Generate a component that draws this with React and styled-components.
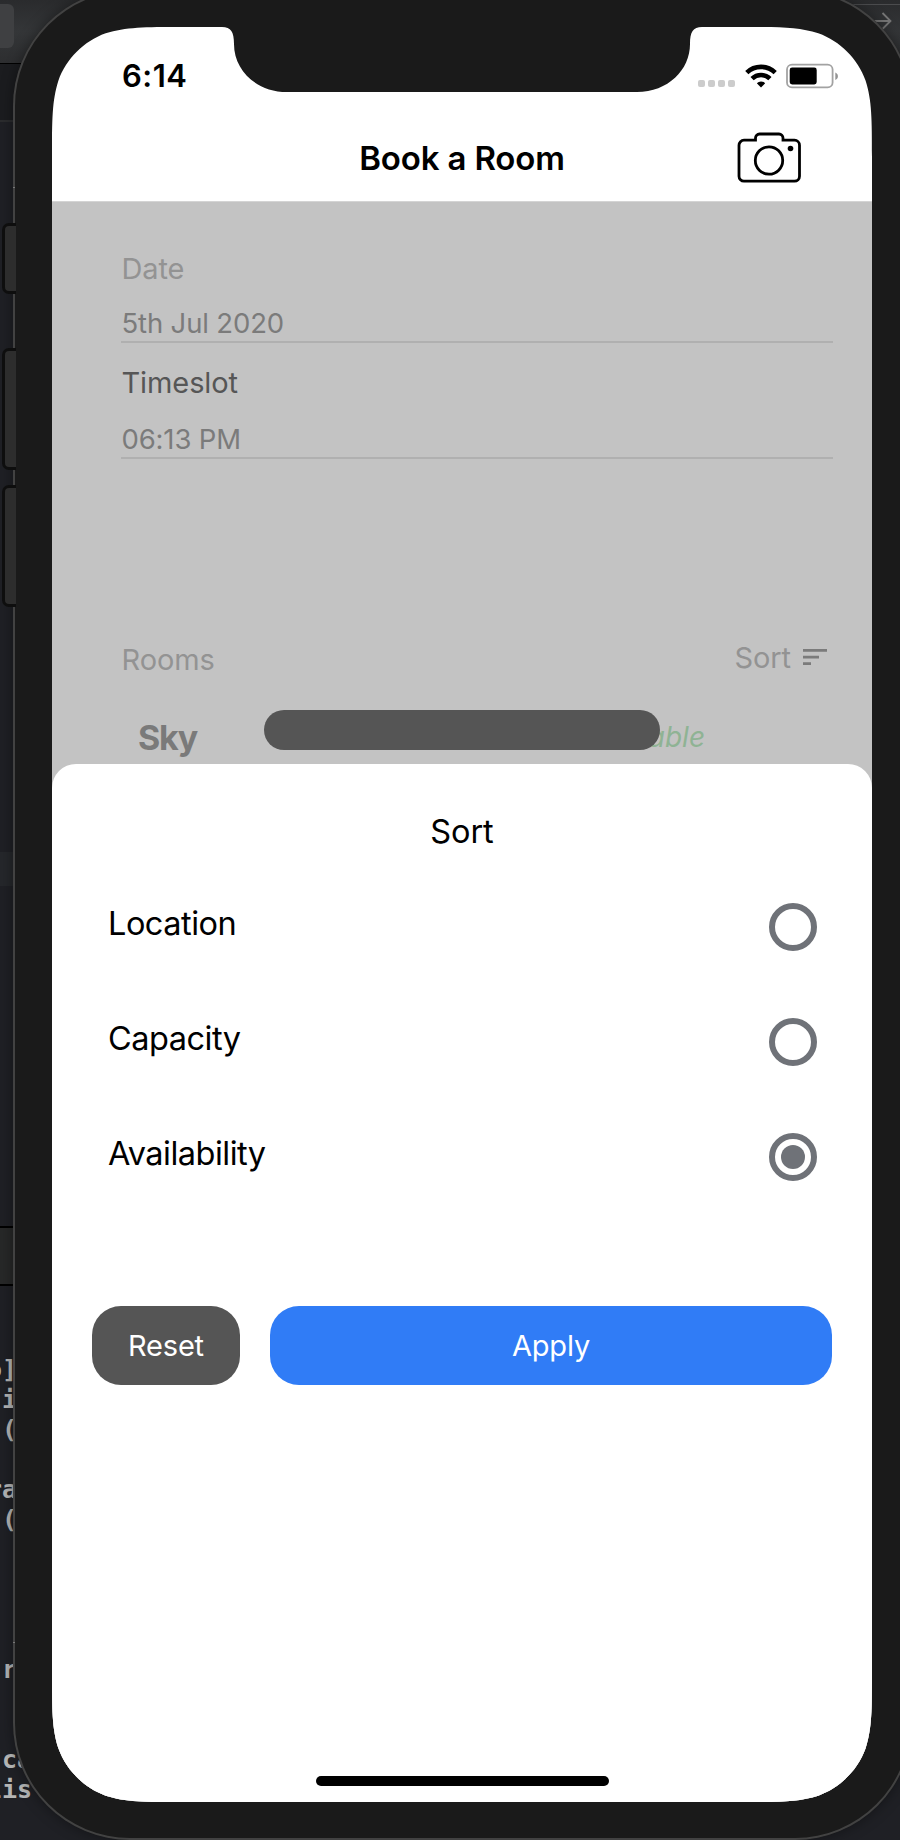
import React from "react";
import styled, { createGlobalStyle } from "styled-components";

const GlobalStyle = createGlobalStyle`
  *, *::before, *::after { box-sizing: border-box; }
  body { margin: 0; background: #1f2025; }
`;

/* Smooth-cornered display outline with the notch cut out of its top edge */
const W = 820;
const H = 1775;
const R = 85;
const corner = (x, y, dx, dy, vertical) => {
  const a = (u, v) => `${(x + dx * u * R).toFixed(2)} ${(y + dy * v * R).toFixed(2)}`;
  const pts = [
    [1.5287, 0], [1.0885, 0], [0.8684, 0], [0.6315, 0.0749],
    [0.3728, 0.1691], [0.1691, 0.3728], [0.0749, 0.6315],
    [0, 0.8684], [0, 1.0885], [0, 1.5287],
  ];
  const list = vertical ? [...pts].reverse() : pts;
  const p = list.map(([u, v]) => a(u, v));
  return `L${p[0]} C${p[1]} ${p[2]} ${p[3]} C${p[4]} ${p[5]} ${p[6]} C${p[7]} ${p[8]} ${p[9]}`;
};
const outline = [
  "M410 65 L235 65 C204 65 182 43 182 17 C182 5 179 0 170 0",
  corner(0, 0, 1, 1, false),
  corner(0, H, 1, -1, true),
  corner(W, H, -1, -1, false),
  corner(W, 0, -1, 1, true),
  "L650 0 C641 0 638 5 638 17 C638 43 616 65 585 65 Z",
].join(" ");

const Desktop = styled.div`
  position: relative;
  width: 900px;
  height: 1840px;
  overflow: hidden;
  background: #1f2025;
  font-family: Inter, "Liberation Sans", sans-serif;
`;

const Editor = styled.div`
  display: flex;
  flex-direction: column;
  height: 1840px;
`;

const Toolbar = styled.div`
  display: flex;
  justify-content: space-between;
  align-items: flex-start;
  height: 64px;
  padding-top: 4px;
  border-bottom: 1px solid #000;
  background: linear-gradient(#2a2b2d, #343638 50%, #2d2e30);
`;

const ToolButton = styled.div`
  width: 14px;
  height: 44px;
  border-radius: 0 6px 6px 0;
  background: #3f4042;
`;

const NavField = styled.div`
  display: flex;
  width: 70px;
  height: 60px;
  padding: 7px 8px 0 0;
  justify-content: flex-end;
  border-top: 1px solid #4b4c4e;
`;

const TabStrip = styled.div`
  height: 58px;
  background: #1b1c1f;
  border-bottom: 2px solid #2b2c2e;
`;

const CodePane = styled.div`
  height: 1104px;
  padding-top: 730px;
`;

const ActiveLine = styled.div`
  height: 34px;
  background: #25272b;
`;

const DebugBar = styled.div`
  height: 60px;
  border: solid #000;
  border-width: 2px 0;
  background: #272828;
`;

const Console = styled.pre`
  flex: 1;
  margin: 0 0 0 -13px;
  padding-top: 69px;
  font: bold 25px/30px "DejaVu Sans Mono", "Liberation Mono", monospace;
  color: #b4b5b5;
`;

const Phone = styled.div`
  position: absolute;
  left: 13px;
  top: -11px;
  width: 899px;
  height: 1851px;
  padding: 38px 0 0 39px;
  border-radius: 117px;
  background: #1a1a1a;
  box-shadow: inset 0 0 0 2px #424242, 0 0 14px rgba(0, 0, 0, 0.4);
`;

const SideButton = styled.div`
  position: absolute;
  left: 2px;
  top: ${(p) => p.$top}px;
  width: 14px;
  height: ${(p) => p.$height}px;
  border: solid #0e0e0e;
  border-width: 3px 0 3px 3px;
  border-radius: 7px 0 0 7px;
  background: #2d2d2d;
`;

const AntennaBand = styled.div`
  position: absolute;
  left: 13px;
  top: ${(p) => p.$top}px;
  width: 2px;
  height: 1px;
  background: #777;
`;

const Screen = styled.div`
  display: flex;
  flex-direction: column;
  width: ${W}px;
  height: ${H}px;
  background: #fff;
  clip-path: path("${outline}");
`;

const StatusBar = styled.div`
  display: flex;
  align-items: center;
  justify-content: space-between;
  height: 86px;
  padding: 12px 33px 0 70px;
`;

const Clock = styled.span`
  font-size: 31px;
  font-weight: 600;
  line-height: 36px;
  letter-spacing: 0.5px;
  color: #000;
`;

const Indicators = styled.div`
  display: flex;
  align-items: center;
`;

const Signal = styled.div`
  display: flex;
  gap: 3px;
  margin: 15px 10px 0 0;
`;

const SignalDot = styled.i`
  width: 7px;
  height: 7px;
  border-radius: 2px;
  background: #cccccc;
`;

const Header = styled.header`
  display: grid;
  grid-template-columns: 1fr auto 1fr;
  align-items: center;
  height: 89px;
  padding: 1px 69px 0;
  border-bottom: 1px solid #d4d4d4;
`;

const Title = styled.h1`
  grid-column: 2;
  margin: 0;
  font-size: 33px;
  font-weight: 600;
  line-height: 40px;
  letter-spacing: -0.15px;
  color: #000;
`;

const CameraButton = styled.div`
  display: flex;
  justify-content: flex-end;
`;

const Body = styled.main`
  display: flex;
  flex: 1;
  flex-direction: column;
  background: #c3c3c3;
`;

const Form = styled.section`
  height: 562px;
  padding: 49px 39px 0 69px;
`;

const Label = styled.div`
  padding-left: 0.5px;
  font-size: 29px;
  line-height: 36px;
  letter-spacing: -0.1px;
  color: ${(p) => (p.$strong ? "#565656" : "#939393")};
`;

const FieldValue = styled.div`
  margin: ${(p) => p.$gap}px 0 22px;
  padding: 1px 0 0 0.5px;
  border-bottom: 2px solid #b0b0b0;
  font-size: 27.5px;
  line-height: 35px;
  letter-spacing: -0.15px;
  color: #7b7b7b;
`;

const ListHead = styled.div`
  display: flex;
  justify-content: space-between;
  height: 36px;
  margin-top: 183px;
`;

const SortTrigger = styled.div`
  display: flex;
  align-items: center;
  gap: 12px;
  height: 32px;
  padding-right: 6px;
`;

const RoomRow = styled.div`
  position: relative;
  display: flex;
  justify-content: space-between;
  align-items: center;
  height: 40px;
  margin-top: 40px;
  padding: 0 128px 0 17px;
`;

const RoomName = styled.strong`
  font-size: 34px;
  line-height: 40px;
  font-weight: 700;
  letter-spacing: -1.2px;
  color: #7a7a7a;
`;

const RoomState = styled.em`
  padding-bottom: 1px;
  font-size: 28px;
  line-height: 39px;
  color: #8fb394;
`;

const Redaction = styled.div`
  position: absolute;
  left: 143px;
  top: -8px;
  width: 396px;
  height: 40px;
  border-radius: 20px;
  background: #555;
`;

const Sheet = styled.section`
  display: flex;
  flex: 1;
  flex-direction: column;
  padding: 46px 40px 16px;
  border-radius: 24px 24px 0 0;
  background: #fff;
`;

const SheetTitle = styled.h2`
  margin: 0 0 15px;
  font-size: 32.5px;
  font-weight: 400;
  line-height: 44px;
  letter-spacing: -0.1px;
  text-align: center;
  color: #000;
`;

const Option = styled.div`
  display: flex;
  align-items: center;
  justify-content: space-between;
  height: 115px;
  padding: 0 15px 0 16px;
`;

const OptionLabel = styled.span`
  padding-bottom: 6px;
  font-size: 32.5px;
  line-height: 40px;
  letter-spacing: -0.5px;
  color: #000;
`;

const Radio = styled.span`
  display: grid;
  place-items: center;
  width: 48px;
  height: 48px;
  border: 6px solid #6f7278;
  border-radius: 50%;

  &::after {
    content: "";
    width: 24px;
    height: 24px;
    border-radius: 50%;
    background: ${(p) => (p.$on ? "#6f7278" : "transparent")};
  }
`;

const Actions = styled.div`
  display: flex;
  gap: 30px;
  margin-top: 92px;
`;

const Button = styled.button`
  flex: ${(p) => (p.$primary ? "1" : "0 0 148px")};
  height: 79px;
  padding: 0;
  border: 0;
  border-radius: 29px;
  background: ${(p) => (p.$primary ? "#307cf6" : "#555")};
  color: #fff;
  font: 400 29px/36px Inter, "Liberation Sans", sans-serif;
  letter-spacing: -0.2px;
`;

const HomeIndicator = styled.div`
  width: 293px;
  height: 10px;
  margin: auto auto 0;
  border-radius: 5px;
  background: #000;
`;

const WifiIcon = styled.svg`
  margin-right: 9px;
`;

const BatteryIcon = () => (
  <svg width="53" height="26" viewBox="0 0 53 26">
    <rect x="1" y="1.6" width="45.6" height="22.8" rx="5" fill="none" stroke="#a2a2a2" strokeWidth="1.8" />
    <rect x="3.7" y="4.6" width="27" height="16.8" rx="2.4" />
    <path d="M49.3 9.4c3.5 1.3 3.5 6.2 0 7.5z" fill="#939393" />
  </svg>
);

const CameraIcon = () => (
  <svg width="66" height="51" viewBox="0 0 66 51" fill="none" stroke="#000" strokeWidth="2.8">
    <path d="M7 8.2h11.5V6a4 4 0 0 1 4-4h19.500a4 4 0 0 1 4 4v2.2H57.500a5 5 0 0 1 5 5v31a5 5 0 0 1-5 5H7a5 5 0 0 1-5-5v-31a5 5 0 0 1 5-5z" />
    <circle cx="32" cy="28.5" r="13.7" />
    <circle cx="53.5" cy="16.5" r="2.8" fill="#000" stroke="none" />
  </svg>
);

const SortIcon = () => (
  <svg width="24" height="18" viewBox="0 0 24 18" fill="#7b7b7b">
    <path d="M0 0h24v2.7H0zM0 6.7h16v2.7H0zM0 13.3h8V16H0z" />
  </svg>
);

const ForwardIcon = () => (
  <svg width="18" height="18" viewBox="0 0 18 18" fill="none" stroke="#777" strokeWidth="1.8">
    <path d="M0 9h16M8.500 1l8 8-8 8" />
  </svg>
);

const consoleText = [
  "o]", " i", " (", "", "ra", " (", "", "", "", "", " r", "", "", " ca", "lis",
].join("\n");

const options = [
  { name: "Location" },
  { name: "Capacity" },
  { name: "Availability", on: true },
];

export default function App() {
  return (
    <Desktop>
      <GlobalStyle />
      <Editor>
        <Toolbar>
          <ToolButton />
          <NavField><ForwardIcon /></NavField>
        </Toolbar>
        <TabStrip />
        <CodePane><ActiveLine /></CodePane>
        <DebugBar />
        <Console>{consoleText}</Console>
      </Editor>
      <Phone>
        <Screen>
          <StatusBar>
            <Clock>6:14</Clock>
            <Indicators>
              <Signal>
                <SignalDot /><SignalDot /><SignalDot /><SignalDot />
              </Signal>
              <WifiIcon width="32" height="24" viewBox="0 0 32 24">
                <g fill="none" stroke="#000" strokeWidth="4.6">
                  <path d="M1.8 8.6a20.4 20.4 0 0 1 28.4 0" />
                  <path d="M7.1 14.6a12.8 12.8 0 0 1 17.8 0" />
                </g>
                <path d="M16 23.5l-4.2-4.3a6 6 0 0 1 8.4 0z" />
              </WifiIcon>
              <BatteryIcon />
            </Indicators>
          </StatusBar>
          <Header>
            <Title>Book a Room</Title>
            <CameraButton><CameraIcon /></CameraButton>
          </Header>
          <Body>
            <Form>
              <Label>Date</Label>
              <FieldValue $gap={18}>5th Jul 2020</FieldValue>
              <Label $strong>Timeslot</Label>
              <FieldValue $gap={20}>06:13 PM</FieldValue>
              <ListHead>
                <Label>Rooms</Label>
                <SortTrigger>
                  <Label>Sort</Label>
                  <SortIcon />
                </SortTrigger>
              </ListHead>
              <RoomRow>
                <RoomName>Sky</RoomName>
                <RoomState>able</RoomState>
                <Redaction />
              </RoomRow>
            </Form>
            <Sheet>
              <SheetTitle>Sort</SheetTitle>
              {options.map((o) => (
                <Option key={o.name}>
                  <OptionLabel>{o.name}</OptionLabel>
                  <Radio $on={o.on} />
                </Option>
              ))}
              <Actions>
                <Button>Reset</Button>
                <Button $primary>Apply</Button>
              </Actions>
              <HomeIndicator />
            </Sheet>
          </Body>
        </Screen>
      </Phone>
      <SideButton $top={223} $height={71} />
      <SideButton $top={348} $height={122} />
      <SideButton $top={485} $height={122} />
      <AntennaBand $top={187} />
      <AntennaBand $top={1642} />
    </Desktop>
  );
}
